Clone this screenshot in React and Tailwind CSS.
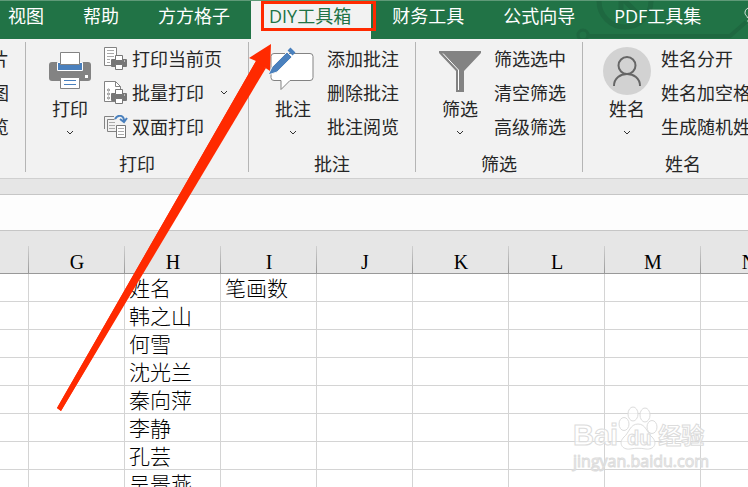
import { Lightbulb } from "lucide-react";

const tabs = ["视图", "帮助", "方方格子", "DIY工具箱", "财务工具", "公式向导", "PDF工具集"];
const columns = ["G", "H", "I", "J", "K", "L", "M", "N"];
const rows = [
  ["姓名", "笔画数"],
  ["韩之山"],
  ["何雪"],
  ["沈光兰"],
  ["秦向萍"],
  ["李静"],
  ["孔芸"],
  ["吴景燕"],
];

const PrinterIcon = () => (
  <svg width="44" height="48" viewBox="0 0 44 48" fill="none">
    <rect x="1" y="15" width="42" height="19" rx="3" fill="#838383" />
    <path d="M9.500 15.500h25v8h-25z" fill="#4a80bd" stroke="#fff" />
    <path d="M12.500 5.500h19v12h-19z" fill="#fff" stroke="#838383" />
    <path d="M12.500 30.500h19v11h-19z" fill="#fff" stroke="#838383" />
    <path d="M16 33.500h12M16 37.500h12" stroke="#4a80bd" />
    <rect x="37" y="28" width="3" height="3" fill="#fff" />
  </svg>
);

const CommentIcon = () => (
  <svg width="48" height="48" viewBox="0 0 48 48" fill="none">
    <path d="M5 6.500h36a3 3 0 0 1 3 3v21a3 3 0 0 1-3 3H21l-9 9v-9H5a3 3 0 0 1-3-3v-21a3 3 0 0 1 3-3z" fill="#fff" stroke="#838383" />
    <path d="M3 20 18 5l5 5L8 25l-9 3z" fill="#4a80bd" stroke="#f2f2f2" />
    <path d="m20 2 5 5" stroke="#4a80bd" strokeWidth="4" />
  </svg>
);

const FunnelIcon = () => (
  <svg width="42" height="48" viewBox="0 0 42 48" fill="none">
    <path d="M0 4h42v2L25 24v21h-8V24L0 6z" fill="#838383" />
    <path d="M4 6.500 19.500 23v20" stroke="#fff" />
  </svg>
);

const PersonIcon = () => (
  <svg width="48" height="48" viewBox="0 0 48 48" fill="none">
    <circle cx="24" cy="24" r="24" fill="#d2d2d2" />
    <circle cx="24" cy="18.500" r="8.500" stroke="#666" strokeWidth="2" />
    <path d="M11 39c0-16 26-16 26 0" stroke="#666" strokeWidth="2" />
  </svg>
);

const MiniPrinter = () => (
  <g>
    <rect x="7" y="12" width="16" height="8" rx="1" fill="#777" />
    <path d="M11.500 8.500h7v5h-7zM11.500 17.500h7v5h-7z" fill="#fff" stroke="#777" />
    <path d="M20 14h1" stroke="#fff" />
  </g>
);

const PrintPageIcon = () => (
  <svg width="24" height="24" viewBox="0 0 24 24" fill="none">
    <path d="M.5.500h12v18H.5z" fill="#fff" stroke="#838383" />
    <path d="M3 3.500h7M3 6.500h7M3 9.500h7M3 12.500h3M3 15.500h3" stroke="#aaa" />
    <MiniPrinter />
  </svg>
);

const BatchIcon = () => (
  <svg width="24" height="24" viewBox="0 0 24 24" fill="none">
    <path d="M.5.500h11l5 5v15H.5z" fill="#fff" stroke="#838383" />
    <path d="M11.500.500v5h5" stroke="#838383" />
    <circle cx="4.500" cy="9" r="1" stroke="#838383" />
    <circle cx="4.500" cy="13" r="1" stroke="#838383" />
    <circle cx="4.500" cy="17" r="1" stroke="#838383" />
    <MiniPrinter />
  </svg>
);

const DuplexIcon = () => (
  <svg width="24" height="24" viewBox="0 0 24 24" fill="none">
    <path d="M.5 14V1.500H10M12 16.500H3.500v-12h7" stroke="#838383" />
    <path d="M5 7.500h6M5 10.500h6M5 13.500h6" stroke="#aaa" />
    <path d="M12.500 10.500h9v12h-9z" fill="#fff" stroke="#777" />
    <path d="M14 13.500h6M14 16.500h6M14 19.500h6" stroke="#aaa" />
    <path d="M11 4c3-5 9-4 9 2M16 4l4 3 3-4" stroke="#4a80bd" strokeWidth="2" />
  </svg>
);

const Chevron = () => (
  <svg width="8" height="6" viewBox="0 0 8 6" fill="none" stroke="#333">
    <path d="m1 1 3 3 3-3" />
  </svg>
);

const groups = [
  {
    name: "打印",
    icon: <PrinterIcon />,
    width: "w-[223px]",
    items: [
      { text: "打印当前页", icon: <PrintPageIcon /> },
      { text: "批量打印", icon: <BatchIcon />, menu: true },
      { text: "双面打印", icon: <DuplexIcon /> },
    ],
  },
  {
    name: "批注",
    icon: <CommentIcon />,
    width: "w-[167px]",
    items: [{ text: "添加批注" }, { text: "删除批注" }, { text: "批注阅览" }],
  },
  {
    name: "筛选",
    icon: <FunnelIcon />,
    width: "w-[167px]",
    items: [{ text: "筛选选中" }, { text: "清空筛选" }, { text: "高级筛选" }],
  },
  {
    name: "姓名",
    icon: <PersonIcon />,
    width: "w-[201px]",
    items: [{ text: "姓名分开" }, { text: "姓名加空格" }, { text: "生成随机姓名" }],
  },
];

const TabBar = () => (
  <nav className="relative h-[39px] shrink-0 overflow-hidden border-t border-[#5f9a78] bg-[#217346] text-white">
    <svg className="absolute top-0 left-[575px]" width="180" height="38" viewBox="0 0 180 38" fill="none" stroke="#1e6840">
      <circle cx="50" cy="0" r="26" strokeWidth="5" />
      <circle cx="8" cy="34" r="5" strokeWidth="3" />
      <path d="M13 35h142l16-14" strokeWidth="4" />
      <path d="M46-4v16M46-4l16 16" strokeWidth="5" />
    </svg>
    <div className="relative flex h-full gap-[3px]">
      {tabs.map((tab) => (
        <button
          key={tab}
          className={
            tab === "DIY工具箱"
              ? "shrink-0 bg-[#f2f2f2] pr-5 pb-2 pl-[18px] text-[#217346]"
              : "shrink-0 px-[18px] pb-2 first:pl-2"
          }
        >
          {tab}
        </button>
      ))}
      <button aria-label="操作说明" className="shrink-0 px-[18px] pb-2">
        <Lightbulb size={20} strokeWidth={1} />
      </button>
    </div>
  </nav>
);

const RibbonGroup = ({ group }) => (
  <section className={`flex shrink-0 flex-col border-r border-[#b5b5b5] pl-5 ${group.width}`}>
    <div className="flex">
      <button className="flex w-12 shrink-0 flex-col items-center pt-[5px]">
        {group.icon}
        <span className="leading-7">{group.name}</span>
        <span className="flex h-5 items-center">
          <Chevron />
        </span>
      </button>
      <div className="flex flex-col pl-2.5">
        {group.items.map((item) => (
          <button key={item.text} className="flex h-[34px] items-center gap-1 whitespace-nowrap">
            {item.icon}
            {item.text}
            {item.menu && (
              <span className="pl-3">
                <Chevron />
              </span>
            )}
          </button>
        ))}
      </div>
    </div>
    <h2 className="-ml-5 h-7 text-center leading-10">{group.name}</h2>
  </section>
);

const Sheet = () => (
  <table className="w-[797px] table-fixed border-separate border-spacing-0 font-light text-black">
    <colgroup>
      <col className="w-[29px]" />
      {columns.map((c) => (
        <col key={c} className="w-24" />
      ))}
    </colgroup>
    <thead>
      <tr className="bg-[#e6e6e6]">
        {["", ...columns].map((c) => (
          <th
            key={c}
            className="h-[43px] border-b border-[#999] bg-[linear-gradient(#d0d0d0,#999)] bg-[length:1px_27px] bg-right-bottom bg-no-repeat p-0 pt-5 font-light"
          >
            <span className="block text-center font-['Liberation_Serif',serif] text-xl leading-5">{c}</span>
          </th>
        ))}
      </tr>
    </thead>
    <tbody>
      {rows.map(([name, count]) => (
        <tr key={name}>
          <td className="h-7 border-r border-b border-[#d4d4d4] p-0" />
          {columns.map((c) => (
            <td
              key={c}
              className="h-7 border-r border-b border-[#d4d4d4] p-0 pl-1 text-[21px] leading-6 whitespace-nowrap"
            >
              {c === "H" ? name : c === "I" ? count : ""}
            </td>
          ))}
        </tr>
      ))}
    </tbody>
  </table>
);

const Watermark = () => (
  <div className="pointer-events-none absolute top-[403px] left-[573px] text-white/60 [-webkit-text-stroke:1px_#dcdcdc]">
    <div className="flex h-12 items-end font-bold">
      <span className="font-['Liberation_Sans',sans-serif] text-[29px] leading-8">Bai</span>
      <svg width="40" height="45" viewBox="0 0 40 45" fill="#fff" fillOpacity=".6" stroke="#dcdcdc">
        <ellipse cx="6" cy="18" rx="5" ry="6.500" />
        <ellipse cx="15" cy="8" rx="5" ry="7" />
        <ellipse cx="27" cy="9" rx="5" ry="7" />
        <ellipse cx="34" cy="21" rx="5" ry="6.500" />
        <path d="M20 18c-8 0-9 9-14 13-6 6-2 13 6 12 6-1 10-1 16 0 8 1 12-6 6-12-5-4-6-13-14-13z" />
        <text x="9" y="39" fontSize="20" fontFamily="Liberation Sans">du</text>
      </svg>
      <span className="text-[23px] leading-8">经验</span>
    </div>
    <div className="font-['Open_Sans',sans-serif] text-base leading-5 font-normal">jingyan.baidu.com</div>
  </div>
);

const App = () => {
  return (
    <div className="relative flex h-screen flex-col overflow-hidden bg-white font-['Open_Sans','Noto_Sans_CJK_SC',sans-serif] text-lg font-normal text-[#262626]">
      <TabBar />
      <div className="flex shrink-0 overflow-hidden border-b border-[#d0d0d0] bg-[#f2f2f2] pt-[3px] pb-1.5">
        <div className="flex w-[26px] shrink-0 flex-col items-end border-r border-[#b5b5b5] pr-4">
          {["图片", "截图", "浏览"].map((text) => (
            <button key={text} className="h-[34px] whitespace-nowrap">
              {text}
            </button>
          ))}
        </div>
        {groups.map((group) => (
          <RibbonGroup key={group.name} group={group} />
        ))}
      </div>
      <div className="h-4 shrink-0 border-b border-[#c6c6c6] bg-[#e6e6e6]" />
      <input aria-label="编辑栏" className="h-9 w-full shrink-0 border-b border-[#c6c6c6] bg-[#fdfdfd] px-2" />
      <Sheet />
      <Watermark />
      {/* red box and arrow pointing at the tab */}
      <div className="pointer-events-none absolute top-px left-[261px] h-[30px] w-[115px] border-[3px] border-[#ff2a00]" />
      <svg className="pointer-events-none absolute top-0 left-0" width="300" height="420" viewBox="0 0 300 420">
        <path d="M271 44 249 58l7 3L57 408l4 3L264 67l6 4z" fill="#ff2a00" />
        <path d="M256 61 57 408l4 3L266 68z" fill="#ff2a00" />
      </svg>
    </div>
  );
};

export default App;
